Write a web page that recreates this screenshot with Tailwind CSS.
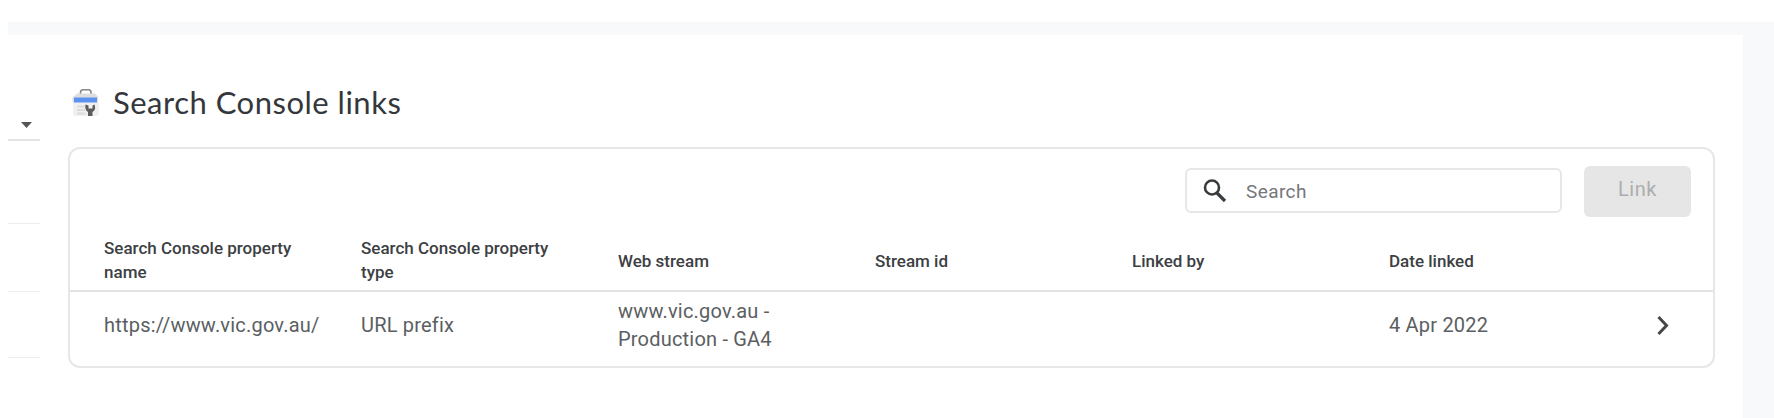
<!DOCTYPE html>
<html lang="en">
<head>
<meta charset="utf-8">
<title>Search Console links</title>
<script src="https://cdn.jsdelivr.net/npm/@tailwindcss/browser@4"></script>
</head>
<body class="h-[418px] w-[1774px] overflow-hidden bg-white font-['Roboto',sans-serif] text-[#3c4043]">
<div class="flex h-full flex-col pt-[22px] pl-2">
  <div class="h-[13px] shrink-0 bg-[#f8f9fb]"></div>
  <div class="flex flex-1">
    <aside class="flex w-8 shrink-0 flex-col">
      <div class="flex h-[106px] items-end justify-center border-b-2 border-[#e3e4e5] pb-[11px] pl-[5px]">
        <svg class="h-[6px] w-[11px]" viewBox="0 0 11 6"><path d="M0 0h11L5.500 6z" fill="#555"/></svg>
      </div>
      <div class="h-[83px] border-b border-[#ededee]"></div>
      <div class="h-[68px] border-b border-[#ededee]"></div>
      <div class="h-[66px] border-b border-[#ededee]"></div>
    </aside>
    <main class="w-[1703px] shrink-0 pt-[49px] pl-7">
      <header class="flex h-9 items-center gap-3 pl-[3px]">
        <svg class="h-[30px] w-[30px]" viewBox="0 0 30 30">
          <path d="M9.500 7.500V5.500Q9.500 2.800 12 2.800h5.500q2.500 0 2.500 2.700V7.500" fill="none" stroke="#858585" stroke-width="1.600"/>
          <path d="M4 8.500 6 6.500H24L27 9.500V15H1.500V10.500z" fill="#dcdee0"/>
          <path d="M2 15H28V26Q28 29 25 29H5Q2 29 2 26z" fill="#f0f0f0"/>
          <path d="M3 10.500H26V15.500H3z" fill="#5b93ee"/>
          <path d="M6 19.500h8M6 23h8M6 26.500h8" stroke="#dcdcdc" stroke-width="2"/>
          <path d="M14.500 17.500Q13.500 23 17 25V29H21.500V25Q25.500 23 23.500 17.500L21.500 18.500V21.500H17.500V18.500z" fill="#5c5c5c"/>
        </svg>
        <h1 class="font-['Lato',sans-serif] text-[31px] leading-9 tracking-[0.5px] whitespace-nowrap text-[#34373b]">Search Console links</h1>
      </header>
      <section class="mt-[27px] h-[221px] w-[1647px] rounded-xl border-2 border-[#e6e7e9]">
        <div class="flex h-[82px] gap-[22px] pt-[17px] pl-[1115px]">
          <div class="mt-0.5 flex h-[45px] w-[377px] items-center rounded-md border-2 border-[#e6e7e9] pl-4">
            <svg class="h-6 w-6" viewBox="0 0 24 24"><circle cx="9" cy="8.500" r="7" fill="none" stroke="#3a3d40" stroke-width="2.600"/><path d="M13.500 13.500 22 22" stroke="#3a3d40" stroke-width="3.200"/></svg>
            <span class="pt-[3px] pl-[19px] text-[19px] tracking-[0.4px] text-[#75777a]">Search</span>
          </div>
          <div class="flex h-[51px] w-[107px] items-center justify-center rounded-md bg-[#e6e6e6] pb-1.5 text-[20px] tracking-[0.6px] text-[#adadad]">Link</div>
        </div>
        <div class="grid h-[61px] grid-cols-[repeat(6,257px)] items-center border-b-2 border-[#e2e3e5] pb-0.5 pl-[34px] text-[17px] leading-6 font-medium">
          <div>Search Console property<br>name</div><div>Search Console property<br>type</div><div class="pt-0.5">Web stream</div><div class="pt-0.5">Stream id</div><div class="pt-0.5">Linked by</div><div class="pt-0.5">Date linked</div>
        </div>
        <div class="grid h-[66px] grid-cols-[repeat(6,257px)_1fr] items-center pl-[34px] text-[20px] leading-7 tracking-[0.2px] text-[#5b5e62]">
          <div>https://www.vic.gov.au/</div><div>URL prefix</div><div>www.vic.gov.au -<br>Production - GA4</div><div></div><div></div><div>4 Apr 2022</div>
          <svg class="ml-[11px] h-5 w-3" viewBox="0 0 12 20"><path d="M1.500 2 9.500 10.500 1.500 19" fill="none" stroke="#45484b" stroke-width="3"/></svg>
        </div>
      </section>
    </main>
    <div class="flex-1 bg-[#f8f9fb]"></div>
  </div>
</div>
</body>
</html>
